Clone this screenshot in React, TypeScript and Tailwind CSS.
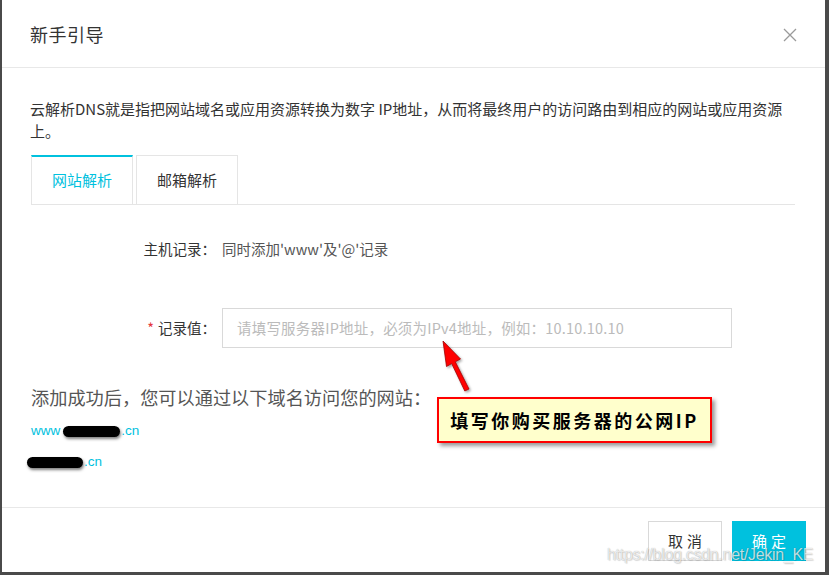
import React from "react";

const CJK = '"Noto Sans CJK SC", "Noto Sans", sans-serif';

export default function App() {
  return (
    <div
      className="relative w-[829px] h-[575px] bg-white border-l-2 border-r-4 border-b-[3px] border-[#4a4a4a] flex flex-col overflow-hidden"
      style={{ fontFamily: CJK }}
    >
      {/* Header */}
      <div className="h-[68px] shrink-0 flex items-center justify-between pl-[28px] pr-[28px] border-b border-[#e8e8e8]">
        <div className="text-[18px] text-[#333] leading-none tracking-[0.5px]">新手引导</div>
        <svg width="14" height="14" viewBox="0 0 14 14" className="mt-[2px]">
          <path d="M1 1 L13 13 M13 1 L1 13" stroke="#9a9a9a" strokeWidth="1.3" fill="none" />
        </svg>
      </div>

      {/* Body */}
      <div className="flex-1 pl-[28px] pr-[30px] pt-[30px]">
        <p className="text-[15px] leading-[22px] text-[#333] whitespace-nowrap">
          云解析DNS就是指把网站域名或应用资源转换为数字 IP地址，从而将最终用户的访问路由到相应的网站或应用资源
          <br />
          上。
        </p>

        {/* Tabs */}
        <div className="mt-[13px] ml-[1px] flex border-b border-[#e5e5e5]">
          <div className="w-[102px] h-[49px] flex items-center justify-center border-t-2 border-t-[#00c1de] border-l border-r border-[#e5e5e5] text-[15px] text-[#00c1de]">
            网站解析
          </div>
          <div className="ml-[3px] w-[102px] h-[49px] flex items-center justify-center border-t border-l border-r border-[#e5e5e5] text-[15px] text-[#333]">
            邮箱解析
          </div>
        </div>

        {/* Form */}
        <div className="pt-[24px]">
          <div className="h-[40px] flex items-center">
            <div className="w-[186px] text-right text-[14.5px] text-[#333]">主机记录：</div>
            <div className="ml-[6px] text-[14.5px] text-[#555]">同时添加'www'及'@'记录</div>
          </div>
          <div className="mt-[39px] h-[40px] flex items-center">
            <div className="w-[186px] text-right text-[14.5px] text-[#333]">
              <span className="text-[#e4393c] mr-[4px]">*</span>记录值：
            </div>
            <div className="ml-[6px] w-[510px] h-[40px] border border-[#d9d9d9] flex items-center pl-[14px] text-[14.5px] text-[#bbb] tracking-[0.2px]">
              请填写服务器IP地址，必须为IPv4地址，例如：10.10.10.10
            </div>
          </div>
        </div>

        <div className="mt-[36px] ml-[1px] text-[18.2px] leading-[26px] text-[#555]">
          添加成功后，您可以通过以下域名访问您的网站：
        </div>
        <div className="mt-[11px] ml-[1px] h-[20px] flex items-center text-[13.5px] text-[#00c1de]" style={{ fontFamily: '"Liberation Sans", Arial, sans-serif' }}>
          <span>www</span>
          <span className="inline-block ml-[3px] w-[57px] h-[11px] rounded-full bg-black shadow-[1px_2px_3px_rgba(0,0,0,0.5)]" />
          <span className="ml-[1px]">.cn</span>
        </div>
        <div className="mt-[11px] ml-[-3px] h-[20px] flex items-center text-[13.5px] text-[#00c1de]" style={{ fontFamily: '"Liberation Sans", Arial, sans-serif' }}>
          <span className="inline-block w-[56px] h-[11px] rounded-full bg-black shadow-[1px_2px_3px_rgba(0,0,0,0.5)]" />
          <span className="ml-[1px]">.cn</span>
        </div>
      </div>

      {/* Footer */}
      <div className="h-[65px] shrink-0 border-t border-[#e8e8e8] flex justify-end items-start pt-[13px] pr-[19px] gap-[10px]">
        <button className="w-[74px] h-[40px] border border-[#d9d9d9] bg-white text-[15px] text-[#333] tracking-[4px] pl-[4px]">
          取消
        </button>
        <button className="w-[74px] h-[40px] bg-[#00c1de] text-[15px] text-white tracking-[4px] pl-[4px]">
          确定
        </button>
      </div>

      {/* Annotation arrow */}
      <svg className="absolute left-[-2px] top-0 pointer-events-none" width="829" height="575" viewBox="0 0 829 575">
        <defs>
          <filter id="sh" x="-50%" y="-50%" width="200%" height="200%">
            <feDropShadow dx="1.5" dy="1.5" stdDeviation="1" floodColor="#000" floodOpacity="0.35" />
          </filter>
        </defs>
        <polygon
          points="443,341 446.5,366.5 451.7,363.6 464.8,391 469,389 455.3,361.8 460.5,359"
          fill="#ff0000"
          stroke="#a00000"
          strokeWidth="0.8"
          filter="url(#sh)"
        />
      </svg>

      {/* Callout */}
      <div className="absolute left-[435px] top-[397px] w-[275px] h-[46px] border-2 border-[#ff0000] bg-[#ffffcc] shadow-[3px_3px_4px_rgba(0,0,0,0.4)] flex items-center justify-center">
        <span className="text-[18px] font-bold text-black tracking-[2.5px]">填写你购买服务器的公网IP</span>
      </div>

      {/* Watermark */}
      <div
        className="absolute left-[605px] top-[545px] text-[16px] leading-[20px] tracking-[-0.3px] text-[rgba(255,255,255,0.75)] [text-shadow:0_0_1px_rgba(0,0,0,0.35),1px_1px_1px_rgba(0,0,0,0.12)] pointer-events-none whitespace-nowrap"
        style={{ fontFamily: '"Liberation Sans", Arial, sans-serif' }}
      >
        https://blog.csdn.net/Jekin_KE
      </div>
    </div>
  );
}
